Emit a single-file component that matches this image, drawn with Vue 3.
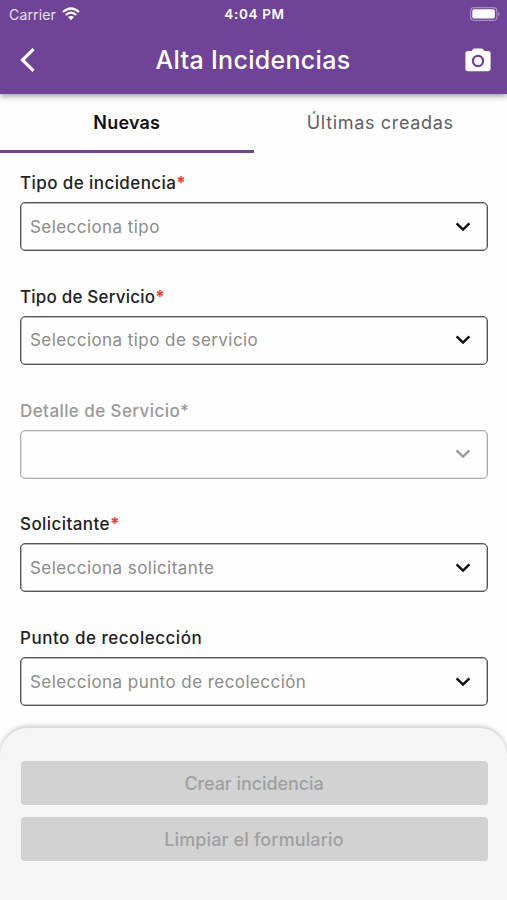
<script setup>
const fields = [
  { label: 'Tipo de incidencia', required: true, placeholder: 'Selecciona tipo', key: 'tipo' },
  { label: 'Tipo de Servicio', required: true, placeholder: 'Selecciona tipo de servicio', key: 'servicio' },
  { label: 'Detalle de Servicio', required: true, placeholder: '', disabled: true, key: 'detalle' },
  { label: 'Solicitante', required: true, placeholder: 'Selecciona solicitante', key: 'solicitante' },
  { label: 'Punto de recolección', required: false, placeholder: 'Selecciona punto de recolección', key: 'punto' },
]
</script>

<template>
  <div class="screen">
    <header class="top">
      <div class="status">
        <div class="carrier">
          <span>Carrier</span>
          <svg class="wifi" viewBox="0 0 18 14" fill="none" stroke="#fff" stroke-width="2.2">
            <path d="M1 5 Q9 -2 17 5" />
            <path d="M3.8 8 Q9 3.4 14.2 8" />
            <path d="M6 10 Q9 7.8 12 10 L9 13.3Z" fill="#fff" stroke="none" />
          </svg>
        </div>
        <span class="time">4:04 PM</span>
        <svg class="battery" viewBox="0 0 31 14">
          <rect x=".6" y=".6" width="26.3" height="12.8" rx="3.5" fill="none" stroke="#a78bc4" stroke-width="1.2" />
          <rect x="2.3" y="2.2" width="22.6" height="9.4" rx="1.8" fill="#fff" />
          <path d="M28.2 4.7 Q31 7 28.2 9.3Z" fill="#a78bc4" />
        </svg>
      </div>
      <div class="bar">
        <svg class="back" viewBox="0 0 16 24" fill="none" stroke="#fff" stroke-width="3.2">
          <path d="M14.500 1.200 L3.500 12 L14.500 22.800" />
        </svg>
        <h1>Alta Incidencias</h1>
        <svg class="camera" viewBox="0 0 26 24">
          <path fill="#fff" fill-rule="evenodd" d="M8.800 .5h8.400l2.400 2.500H23a2.600 2.600 0 0 1 2.600 2.600v15A2.600 2.600 0 0 1 23 23.200H3A2.600 2.600 0 0 1 .4 20.600v-15A2.600 2.600 0 0 1 3 3h3.400ZM13 6.800a6.200 6.200 0 1 0 0 12.400a6.200 6.200 0 0 0 0-12.400Z" />
          <circle cx="13" cy="13" r="3.900" fill="#fff" />
        </svg>
      </div>
    </header>
    <nav class="tabs">
      <div class="tab active"><span>Nuevas</span></div>
      <div class="tab"><span>Últimas creadas</span></div>
    </nav>
    <main class="form">
      <div v-for="f in fields" :key="f.key" class="field" :class="[f.key, { disabled: f.disabled }]">
        <div class="label"><span class="name">{{ f.label }}</span><span v-if="f.required" class="star">*</span></div>
        <div class="select">
          <span class="placeholder">{{ f.placeholder }}</span>
          <svg class="chevron" viewBox="0 0 16 10" fill="none" stroke="currentColor" stroke-width="2.5">
            <path d="M1.600 1.400 L8 7.600 L14.400 1.400" />
          </svg>
        </div>
      </div>
    </main>
    <footer class="actions">
      <button class="crear" disabled>Crear incidencia</button>
      <button class="limpiar" disabled>Limpiar el formulario</button>
    </footer>
  </div>
</template>

<style>
body {
  margin: 0;
  background: #fff;
}
</style>

<style scoped>
.screen {
  width: 507px;
  height: 900px;
  display: flex;
  flex-direction: column;
  overflow: hidden;
  background: #fefefe;
  font-family: Inter, "Liberation Sans", sans-serif;
}
.top {
  height: 94px;
  flex: none;
  background: #6f4498;
  color: #fff;
  box-shadow: 0 2px 6px rgba(0, 0, 0, 0.4);
  z-index: 1;
}
.status {
  height: 28px;
  display: grid;
  grid-template-columns: 1fr auto 1fr;
  align-items: center;
  padding: 0 7px 0 9px;
  box-sizing: border-box;
  font-size: 14px;
}
.carrier {
  display: flex;
  align-items: center;
  gap: 6px;
  color: #e9e0f0;
  letter-spacing: 0.150px;
}
.wifi {
  width: 18px;
  height: 14px;
}
.time {
  font-weight: 600;
  font-size: 13.500px;
  letter-spacing: 0.650px;
}
.battery {
  width: 31px;
  height: 14px;
  justify-self: end;
  margin-right: -1px;
}
.bar {
  height: 64px;
  display: grid;
  grid-template-columns: 40px 1fr 40px;
  align-items: center;
  padding: 0 16px 0 19px;
}
.back {
  width: 16px;
  height: 24px;
}
h1 {
  margin: 0;
  padding-right: 4px;
  text-align: center;
  font-size: 25px;
  font-weight: 500;
  letter-spacing: 0.300px;
}
.camera {
  width: 26px;
  height: 24px;
  justify-self: end;
}
.tabs {
  display: flex;
  height: 59px;
  flex: none;
}
.tab {
  flex: 1;
  display: flex;
  justify-content: center;
  align-items: center;
  box-sizing: border-box;
  border-bottom: 3px solid transparent;
  padding-top: 1px;
  font-size: 18px;
  color: #606060;
  letter-spacing: 0.670px;
}
.tab.active {
  border-color: #6f4498;
  color: #111;
  font-weight: 600;
  letter-spacing: 0.200px;
}
.form {
  display: flex;
  flex-direction: column;
  gap: 34.700px;
  padding: 19.300px 19.500px 0 20px;
  height: 574px;
  box-sizing: border-box;
  flex: none;
}
.field {
  height: 79px;
  flex: none;
  color: #111;
}
.label {
  height: 30px;
  line-height: 22px;
  font-size: 17px;
  font-weight: 500;
  color: #222;
  white-space: nowrap;
  letter-spacing: 0.420px;
}
.servicio .label {
  letter-spacing: 0.200px;
}
.punto .label {
  letter-spacing: 0.520px;
}
.star {
  color: #f43b32;
  font-weight: 700;
}
.disabled .star {
  font-weight: 500;
}
.select {
  height: 49px;
  box-sizing: border-box;
  border: 1px solid #555;
  box-shadow: inset 0 0 0 0.500px #777;
  border-radius: 5px;
  display: flex;
  justify-content: space-between;
  align-items: center;
  padding: 0 16px 0 9px;
  font-size: 17px;
}
.placeholder {
  color: #8b8b8b;
  white-space: nowrap;
  letter-spacing: 0.440px;
}
.chevron {
  width: 16px;
  height: 10px;
}
.disabled,
.disabled .label,
.disabled .star {
  color: #999;
}
.disabled .select {
  border-color: #aaa;
  box-shadow: inset 0 0 0 0.500px #ccc;
}
.actions {
  flex: 1;
  display: flex;
  flex-direction: column;
  gap: 12px;
  padding: 33px 19.500px 0 20.500px;
  background: #f5f5f5;
  border-top: 1px solid #ddd;
  border-radius: 28px 28px 0 0;
  box-shadow: 0 -1px 4px rgba(0, 0, 0, 0.22);
}
button {
  height: 44px;
  flex: none;
  border: 0;
  border-radius: 4px;
  background: #d2d2d2;
  color: #a0a0a0;
  font-family: inherit;
  font-size: 18px;
  font-weight: 500;
  padding: 0;
}
.crear {
  letter-spacing: -0.080px;
}
.limpiar {
  letter-spacing: 0.120px;
}
</style>
